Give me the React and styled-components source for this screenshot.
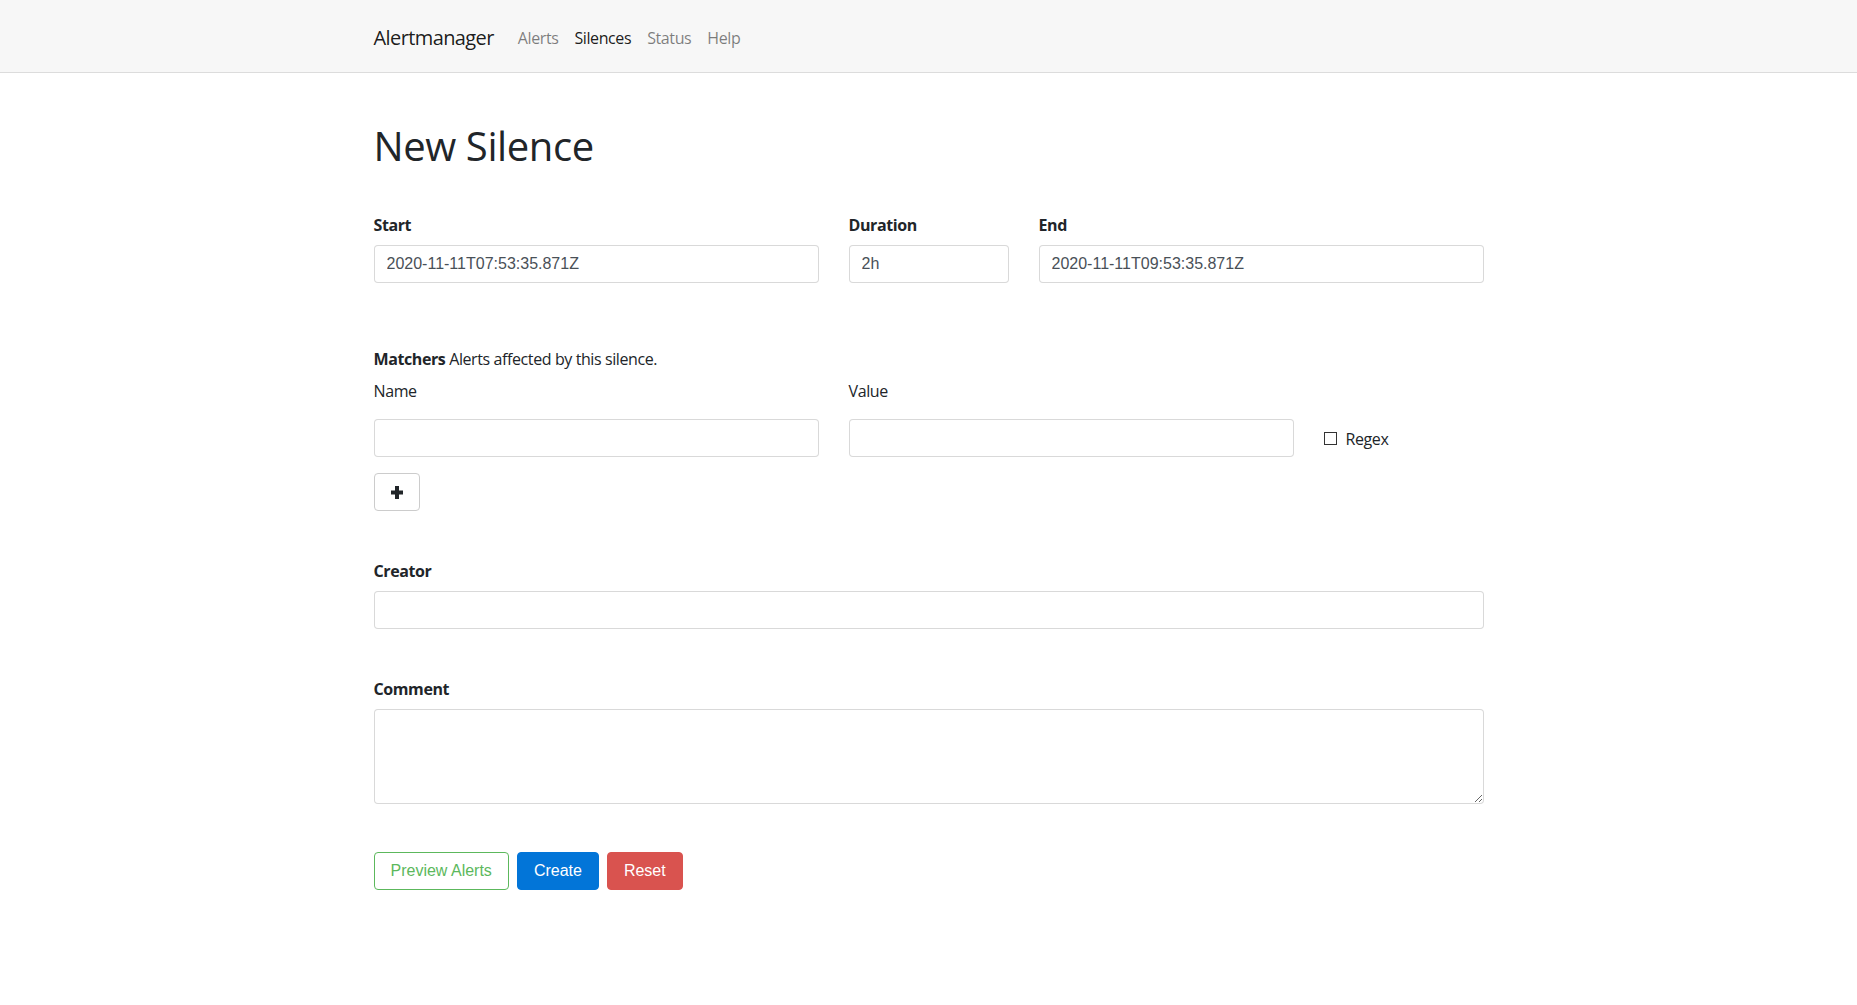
import React from 'react';
import styled, { createGlobalStyle } from 'styled-components';

const GlobalStyle = createGlobalStyle`
  body {
    margin: 0;
    background: #fff;
    color: #212529;
    font-family: "Open Sans", "Noto Sans", sans-serif;
    font-size: 16px;
    line-height: 1.5;
    letter-spacing: -0.025em;
  }
`;

const Navbar = styled.nav`
  height: 72px;
  background: #f7f7f7;
  border-bottom: 1px solid #dcdcdc;
`;

const NavInner = styled.div`
  width: 1110px;
  height: 100%;
  margin: 0 auto;
  display: flex;
  align-items: center;
  padding-top: 4px;
  box-sizing: border-box;
`;

const Brand = styled.a`
  font-size: 20px;
  letter-spacing: -0.03em;
  color: rgba(0, 0, 0, 0.9);
  margin-right: 16px;
  text-decoration: none;
`;

const NavLink = styled.a`
  padding: 0 8px;
  font-size: 16px;
  color: ${(props) => (props.active ? 'rgba(0, 0, 0, 0.9)' : 'rgba(0, 0, 0, 0.5)')};
  text-decoration: none;
`;

const Container = styled.main`
  width: 1110px;
  margin: 0 auto;
`;

const Title = styled.h1`
  font-size: 40px;
  font-weight: 400;
  line-height: 48px;
  margin: 49px 0 43px;
`;

const Row = styled.div`
  display: grid;
  grid-template-columns: ${(props) => props.columns};
  column-gap: 30px;
  align-items: ${(props) => props.align || 'start'};
`;

const Field = styled.div`
  display: flex;
  flex-direction: column;
`;

const Label = styled.label`
  display: block;
  font-weight: ${(props) => (props.light ? 400 : 700)};
  line-height: 24px;
  margin-bottom: ${(props) => (props.light ? '16px' : '8px')};
`;

const Input = styled.input`
  box-sizing: border-box;
  width: 100%;
  height: 38px;
  padding: 6px 12px;
  font-family: "Liberation Sans", Arial, sans-serif;
  font-size: 16px;
  letter-spacing: 0;
  color: #495057;
  background: #fff;
  border: 1px solid rgba(0, 0, 0, 0.15);
  border-radius: 4px;
  outline: none;
`;

const TextArea = styled.textarea`
  box-sizing: border-box;
  display: block;
  width: 100%;
  height: 95px;
  padding: 6px 12px;
  font-family: "Liberation Sans", Arial, sans-serif;
  font-size: 16px;
  color: #495057;
  border: 1px solid rgba(0, 0, 0, 0.15);
  border-radius: 4px;
  outline: none;
`;

const Section = styled.section`
  margin-top: ${(props) => props.gap}px;
`;

const Heading = styled.div`
  line-height: 24px;
  margin-bottom: 8px;
  strong {
    font-weight: 700;
  }
`;

const Regex = styled.label`
  display: flex;
  align-items: center;
  gap: 9px;
  font-size: 16px;
  padding-top: 1px;
`;

const Box = styled.span`
  width: 11px;
  height: 11px;
  border: 1px solid #333;
  display: inline-block;
`;

const IconButton = styled.button`
  margin-top: 16px;
  width: 46px;
  height: 38px;
  display: flex;
  align-items: center;
  justify-content: center;
  background: #fff;
  border: 1px solid #ccc;
  border-radius: 4px;
  padding: 0;
`;

const Actions = styled.div`
  display: flex;
  gap: 8px;
  margin-top: 48px;
`;

const Button = styled.button`
  height: 38px;
  padding: 0 16px;
  font-family: "Liberation Sans", Arial, sans-serif;
  font-size: 16px;
  letter-spacing: 0;
  border-radius: 4px;
  border: 1px solid ${(props) => props.color};
  background: ${(props) => (props.outline ? '#fff' : props.color)};
  color: ${(props) => (props.outline ? props.color : '#fff')};
`;

const PlusIcon = () => (
  <svg width="12" height="13" viewBox="0 0 12 13">
    <rect x="4" y="0" width="4" height="13" fill="#212529" />
    <rect x="0" y="4.5" width="12" height="4" fill="#212529" />
  </svg>
);

const App = () => (
  <>
    <GlobalStyle />
    <Navbar>
      <NavInner>
        <Brand>Alertmanager</Brand>
        <NavLink>Alerts</NavLink>
        <NavLink active>Silences</NavLink>
        <NavLink>Status</NavLink>
        <NavLink>Help</NavLink>
      </NavInner>
    </Navbar>
    <Container>
      <Title>New Silence</Title>
      <Row columns="445px 160px 445px">
        <Field>
          <Label>Start</Label>
          <Input defaultValue="2020-11-11T07:53:35.871Z" />
        </Field>
        <Field>
          <Label>Duration</Label>
          <Input defaultValue="2h" />
        </Field>
        <Field>
          <Label>End</Label>
          <Input defaultValue="2020-11-11T09:53:35.871Z" />
        </Field>
      </Row>
      <Section gap={64}>
        <Heading>
          <strong>Matchers</strong> Alerts affected by this silence.
        </Heading>
        <Row columns="445px 445px 160px">
          <Label light>Name</Label>
          <Label light>Value</Label>
          <span />
        </Row>
        <Row columns="445px 445px 160px" align="center">
          <Input />
          <Input />
          <Regex>
            <Box />
            Regex
          </Regex>
        </Row>
        <IconButton>
          <PlusIcon />
        </IconButton>
      </Section>
      <Section gap={48}>
        <Label>Creator</Label>
        <Input />
      </Section>
      <Section gap={48}>
        <Label>Comment</Label>
        <TextArea />
      </Section>
      <Actions>
        <Button outline color="#5cb85c">Preview Alerts</Button>
        <Button color="#0275d8">Create</Button>
        <Button color="#d9534f">Reset</Button>
      </Actions>
    </Container>
  </>
);

export default App;
